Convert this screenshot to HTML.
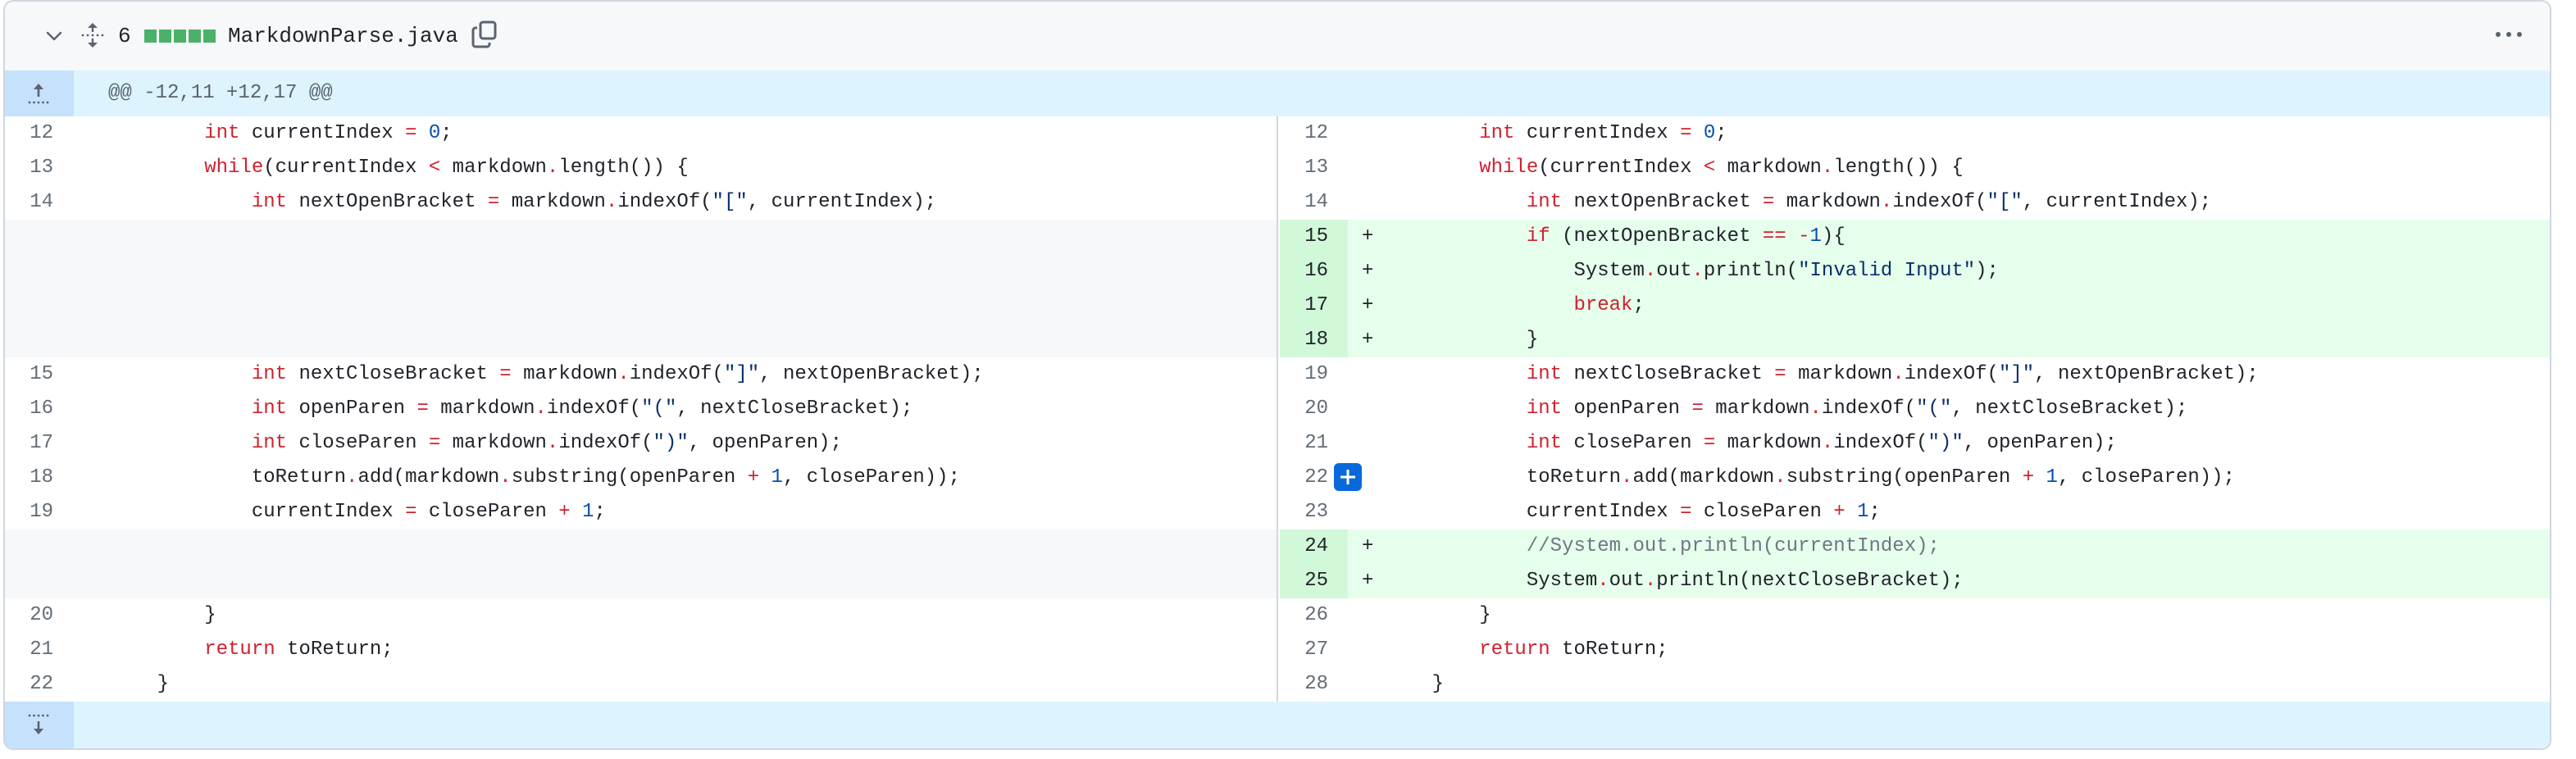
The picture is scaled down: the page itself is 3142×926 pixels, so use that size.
<!DOCTYPE html>
<html><head><meta charset="utf-8"><style>
*{margin:0;padding:0;box-sizing:border-box}
body{width:3142px;height:926px;background:#fff;position:relative;overflow:hidden;font-family:"Liberation Sans",sans-serif}
.box{position:absolute;left:4px;top:0;width:3108px;height:915px;border:2px solid #d0d7de;border-radius:12px;overflow:hidden;background:#fff}
.hdr{position:absolute;left:0;top:0;right:0;height:86px;background:#f6f8fa;border-bottom:2px solid #d0d7de}
.hunk{position:absolute;left:0;right:0;height:56px;background:#ddf4ff}
.hunk .btn{position:absolute;left:0;top:0;width:84px;height:100%;background:#c5e1fb}
.mono{font-family:"Liberation Mono",monospace}
.pane{position:absolute;top:140px;height:714px}
.row{position:relative;height:42px;line-height:42px;font-size:24px;white-space:pre;font-family:"Liberation Mono",monospace;color:#1f2328}
.num{position:absolute;left:0;top:0;width:83px;height:100%;text-align:right;padding-right:24px;color:#636c76}
.code{position:absolute;left:128px;top:0}
.mk{position:absolute;left:100px;top:0}
.empty{background:#f6f8fa}
.add{background:#e6ffec}
.add .num{background:#d1f8d9;color:#1f2328}
.k{color:#cf222e}.n{color:#0550ae}.s{color:#0a3069}.c{color:#6e7781}
</style></head><body>
<div class="box">
 <div class="hdr">
  <svg style="position:absolute;left:48px;top:32px" width="24" height="20" viewBox="0 0 24 20"><path d="M4 6l8 8 8-8" fill="none" stroke="#59636e" stroke-width="2.4" stroke-linecap="round" stroke-linejoin="round"/></svg>
  <svg style="position:absolute;left:92px;top:24px" width="30" height="34" viewBox="0 0 30 34"><path d="M15 2l-6 6h12zM15 32l-6-6h12z" fill="#59636e"/><path d="M15 7v6M15 21v6" stroke="#59636e" stroke-width="2.4"/><g fill="#59636e"><circle cx="3" cy="17" r="1.4"/><circle cx="9" cy="17" r="1.4"/><circle cx="15" cy="17" r="1.4"/><circle cx="21" cy="17" r="1.4"/><circle cx="27" cy="17" r="1.4"/></g></svg>
  <div class="mono" style="position:absolute;left:138px;top:22px;font-size:26px;line-height:40px;color:#1f2328">6</div>
  <div style="position:absolute;left:170px;top:34px;display:flex;gap:3px">
   <div style="width:15px;height:16px;background:#2da44e;opacity:.85"></div><div style="width:15px;height:16px;background:#2da44e;opacity:.85"></div><div style="width:15px;height:16px;background:#2da44e;opacity:.85"></div><div style="width:15px;height:16px;background:#2da44e;opacity:.85"></div><div style="width:15px;height:16px;background:#2da44e;opacity:.85"></div>
  </div>
  <div class="mono" style="position:absolute;left:272px;top:22px;font-size:26px;line-height:40px;color:#1f2328">MarkdownParse.java</div>
  <svg style="position:absolute;left:568px;top:22px" width="34" height="36" viewBox="0 0 34 36"><rect x="12" y="3" width="18" height="20" rx="3" fill="none" stroke="#59636e" stroke-width="3"/><path d="M8 10H6a3 3 0 0 0-3 3v17a3 3 0 0 0 3 3h14a3 3 0 0 0 3-3v-2" fill="none" stroke="#59636e" stroke-width="3"/></svg>
  <svg style="position:absolute;left:3036px;top:34px" width="36" height="12" viewBox="0 0 36 12"><g fill="#59636e"><circle cx="5" cy="6" r="3"/><circle cx="18" cy="6" r="3"/><circle cx="31" cy="6" r="3"/></g></svg>
 </div>
 <div class="hunk" style="top:84px">
  <div class="btn"><svg style="position:absolute;left:26px;top:14px" width="30" height="28" viewBox="0 0 30 28"><path d="M15 2l-6 7h12z" fill="#59636e"/><path d="M15 8v10" stroke="#59636e" stroke-width="2.6"/><g fill="#59636e"><circle cx="4" cy="25" r="1.4"/><circle cx="9.5" cy="25" r="1.4"/><circle cx="15" cy="25" r="1.4"/><circle cx="20.5" cy="25" r="1.4"/><circle cx="26" cy="25" r="1.4"/></g></svg></div>
  <div class="mono" style="position:absolute;left:126px;top:0;line-height:56px;font-size:24px;color:#59636e">@@ -12,11 +12,17 @@</div>
 </div>

 <div class="pane" style="left:0;width:1553px;border-right:2px solid #d0d7de">
  <div class="row"><span class="num">12</span><span class="code">        <span class="k">int</span> currentIndex <span class="k">=</span> <span class="n">0</span>;</span></div>
  <div class="row"><span class="num">13</span><span class="code">        <span class="k">while</span>(currentIndex <span class="k">&lt;</span> markdown<span class="k">.</span>length()) {</span></div>
  <div class="row"><span class="num">14</span><span class="code">            <span class="k">int</span> nextOpenBracket <span class="k">=</span> markdown<span class="k">.</span>indexOf(<span class="s">"["</span>, currentIndex);</span></div>
  <div class="row empty"></div><div class="row empty"></div><div class="row empty"></div><div class="row empty"></div>
  <div class="row"><span class="num">15</span><span class="code">            <span class="k">int</span> nextCloseBracket <span class="k">=</span> markdown<span class="k">.</span>indexOf(<span class="s">"]"</span>, nextOpenBracket);</span></div>
  <div class="row"><span class="num">16</span><span class="code">            <span class="k">int</span> openParen <span class="k">=</span> markdown<span class="k">.</span>indexOf(<span class="s">"("</span>, nextCloseBracket);</span></div>
  <div class="row"><span class="num">17</span><span class="code">            <span class="k">int</span> closeParen <span class="k">=</span> markdown<span class="k">.</span>indexOf(<span class="s">")"</span>, openParen);</span></div>
  <div class="row"><span class="num">18</span><span class="code">            toReturn<span class="k">.</span>add(markdown<span class="k">.</span>substring(openParen <span class="k">+</span> <span class="n">1</span>, closeParen));</span></div>
  <div class="row"><span class="num">19</span><span class="code">            currentIndex <span class="k">=</span> closeParen <span class="k">+</span> <span class="n">1</span>;</span></div>
  <div class="row empty"></div><div class="row empty"></div>
  <div class="row"><span class="num">20</span><span class="code">        }</span></div>
  <div class="row"><span class="num">21</span><span class="code">        <span class="k">return</span> toReturn;</span></div>
  <div class="row"><span class="num">22</span><span class="code">    }</span></div>
 </div>

 <div class="pane" style="left:1555px;width:1553px">
  <div class="row"><span class="num">12</span><span class="code">        <span class="k">int</span> currentIndex <span class="k">=</span> <span class="n">0</span>;</span></div>
  <div class="row"><span class="num">13</span><span class="code">        <span class="k">while</span>(currentIndex <span class="k">&lt;</span> markdown<span class="k">.</span>length()) {</span></div>
  <div class="row"><span class="num">14</span><span class="code">            <span class="k">int</span> nextOpenBracket <span class="k">=</span> markdown<span class="k">.</span>indexOf(<span class="s">"["</span>, currentIndex);</span></div>
  <div class="row add"><span class="num">15</span><span class="mk">+</span><span class="code">            <span class="k">if</span> (nextOpenBracket <span class="k">==</span> <span class="k">-</span><span class="n">1</span>){</span></div>
  <div class="row add"><span class="num">16</span><span class="mk">+</span><span class="code">                System<span class="k">.</span>out<span class="k">.</span>println(<span class="s">"Invalid Input"</span>);</span></div>
  <div class="row add"><span class="num">17</span><span class="mk">+</span><span class="code">                <span class="k">break</span>;</span></div>
  <div class="row add"><span class="num">18</span><span class="mk">+</span><span class="code">            }</span></div>
  <div class="row"><span class="num">19</span><span class="code">            <span class="k">int</span> nextCloseBracket <span class="k">=</span> markdown<span class="k">.</span>indexOf(<span class="s">"]"</span>, nextOpenBracket);</span></div>
  <div class="row"><span class="num">20</span><span class="code">            <span class="k">int</span> openParen <span class="k">=</span> markdown<span class="k">.</span>indexOf(<span class="s">"("</span>, nextCloseBracket);</span></div>
  <div class="row"><span class="num">21</span><span class="code">            <span class="k">int</span> closeParen <span class="k">=</span> markdown<span class="k">.</span>indexOf(<span class="s">")"</span>, openParen);</span></div>
  <div class="row"><span class="num">22</span><span style="position:absolute;left:66px;top:3px;width:34px;height:34px;background:#0969da;border-radius:6px"><svg width="34" height="34" viewBox="0 0 34 34" style="display:block"><path d="M17 8v18M8 17h18" stroke="#fff" stroke-width="3"/></svg></span><span class="code">            toReturn<span class="k">.</span>add(markdown<span class="k">.</span>substring(openParen <span class="k">+</span> <span class="n">1</span>, closeParen));</span></div>
  <div class="row"><span class="num">23</span><span class="code">            currentIndex <span class="k">=</span> closeParen <span class="k">+</span> <span class="n">1</span>;</span></div>
  <div class="row add"><span class="num">24</span><span class="mk">+</span><span class="code">            <span class="c">//System.out.println(currentIndex);</span></span></div>
  <div class="row add"><span class="num">25</span><span class="mk">+</span><span class="code">            System<span class="k">.</span>out<span class="k">.</span>println(nextCloseBracket);</span></div>
  <div class="row"><span class="num">26</span><span class="code">        }</span></div>
  <div class="row"><span class="num">27</span><span class="code">        <span class="k">return</span> toReturn;</span></div>
  <div class="row"><span class="num">28</span><span class="code">    }</span></div>
 </div>

 <div class="hunk" style="top:854px;height:57px">
  <div class="btn"><svg style="position:absolute;left:26px;top:14px" width="30" height="28" viewBox="0 0 30 28"><g fill="#59636e"><circle cx="4" cy="3" r="1.4"/><circle cx="9.5" cy="3" r="1.4"/><circle cx="15" cy="3" r="1.4"/><circle cx="20.5" cy="3" r="1.4"/><circle cx="26" cy="3" r="1.4"/></g><path d="M15 10v10" stroke="#59636e" stroke-width="2.6"/><path d="M15 26l-6-7h12z" fill="#59636e"/></svg></div>
 </div>
</div>
</body></html>
